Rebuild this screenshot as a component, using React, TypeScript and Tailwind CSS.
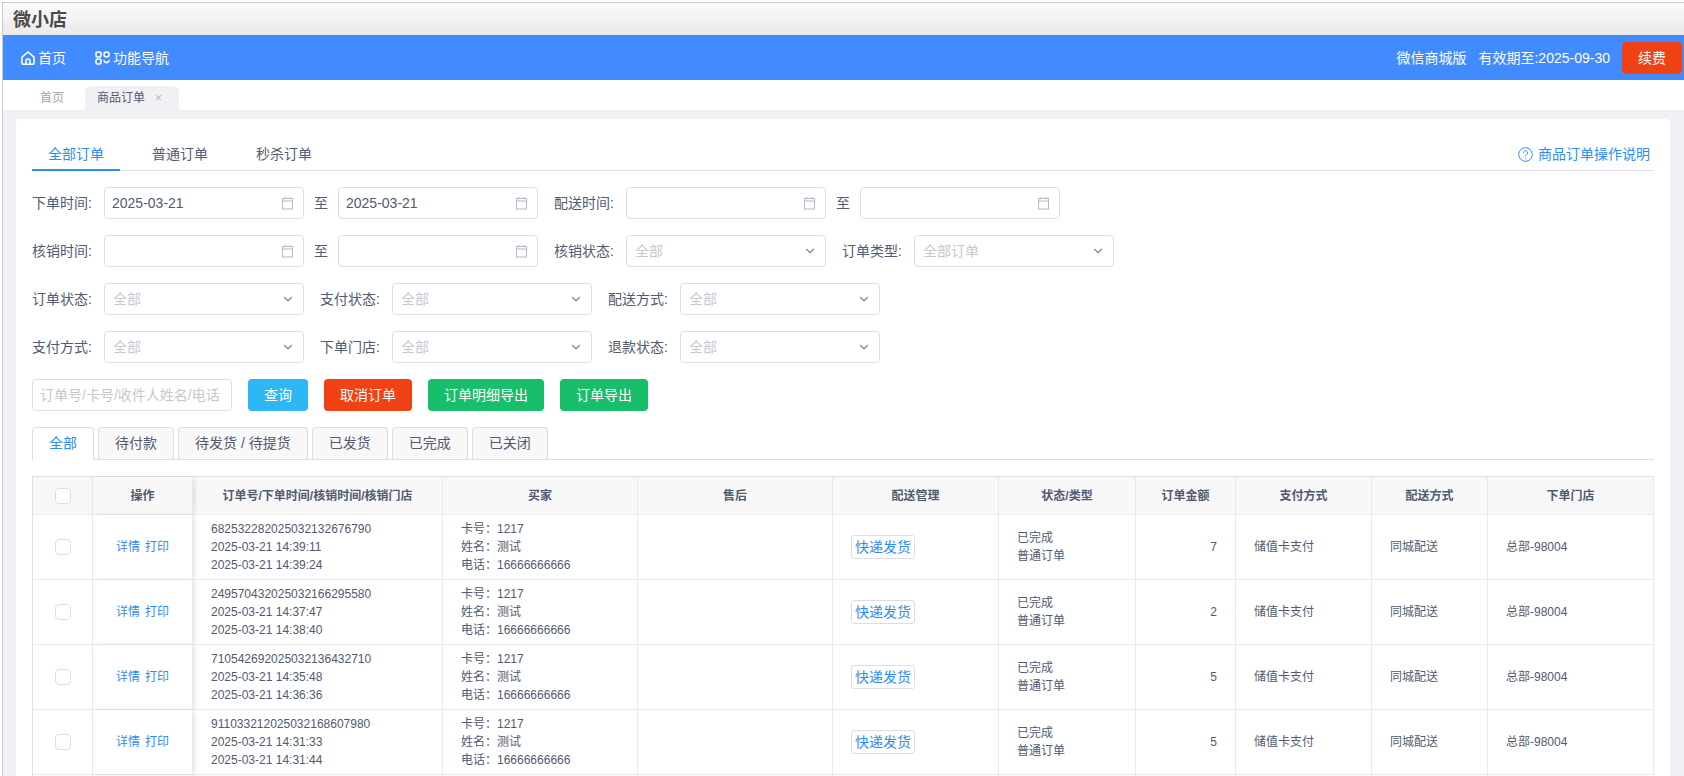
import { ChevronDown } from "lucide-react";

type Order = {
  no: string;
  created: string;
  verified: string;
  amount: number;
};

const orders: Order[] = [
  { no: "682532282025032132676790", created: "2025-03-21 14:39:11", verified: "2025-03-21 14:39:24", amount: 7 },
  { no: "249570432025032166295580", created: "2025-03-21 14:37:47", verified: "2025-03-21 14:38:40", amount: 2 },
  { no: "710542692025032136432710", created: "2025-03-21 14:35:48", verified: "2025-03-21 14:36:36", amount: 5 },
  { no: "911033212025032168607980", created: "2025-03-21 14:31:33", verified: "2025-03-21 14:31:44", amount: 5 },
];

const headers = ["操作", "订单号/下单时间/核销时间/核销门店", "买家", "售后", "配送管理", "状态/类型", "订单金额", "支付方式", "配送方式", "下单门店"];
const statusTabs = ["待付款", "待发货 / 待提货", "已发货", "已完成", "已关闭"];

function CalendarIcon() {
  return (
    <svg width="13" height="14" viewBox="0 0 13 14" fill="none" stroke="#b4b8c8" strokeWidth="1" className="shrink-0">
      <rect x="1.5" y="2.5" width="10" height="10.5" />
      <path d="M1.5 5h10M4 .8v2.4M9 .8v2.4" />
    </svg>
  );
}

function DateField({ value }: { value?: string }) {
  return (
    <div className="flex h-8 w-[200px] items-center justify-between rounded border border-[#dcdee2] bg-white pl-[7px] pr-[9px] text-sm text-[#515a6e]">
      <span>{value}</span>
      <CalendarIcon />
    </div>
  );
}

function SelectField({ value = "全部" }: { value?: string }) {
  return (
    <div className="flex h-8 w-[200px] items-center justify-between rounded border border-[#dcdee2] bg-white pl-2 pr-2 text-sm text-[#c5c8ce]">
      <span>{value}</span>
      <ChevronDown size={14} strokeWidth={2} className="text-[#808695]" />
    </div>
  );
}

function Label({ text }: { text: string }) {
  return <span className="mr-[10px] w-[62px] shrink-0 text-sm text-[#515a6e]">{text}:</span>;
}

function To() {
  return <span className="mx-[10px] text-sm text-[#515a6e]">至</span>;
}

function Checkbox() {
  return <div className="mx-auto h-4 w-4 rounded-sm border border-[#dcdee2] bg-white" />;
}

function ActionButton({ label, className }: { label: string; className: string }) {
  return <button type="button" className={`h-8 rounded text-sm text-white ${className}`}>{label}</button>;
}

export default function App() {
  return (
    <div className="h-[776px] w-full overflow-hidden bg-white pl-[2px] pt-[2px] font-['Liberation_Sans','Noto_Sans_CJK_SC',sans-serif]">
      <div className="flex h-[774px] flex-col border-l border-t border-[#c9c9ce]">
        <div className="flex h-8 shrink-0 items-center bg-gradient-to-b from-[#fbfbfb] to-[#e9e9e9] pl-[10px] pt-[2px] text-lg font-bold text-[#4a4a4a]">
          微小店
        </div>

        <header className="flex h-[45px] shrink-0 items-center justify-between bg-[#428bff] pl-[18px] pr-[2px] text-sm text-white">
          <div className="flex items-center">
            <svg width="14" height="14" viewBox="0 0 14 14" fill="none" stroke="currentColor" strokeWidth="1.6" strokeLinejoin="round" className="mr-[3px]">
              <path d="M1 6.2 7 1l6 5.2V12a1.2 1.2 0 0 1-1.2 1.2H2.2A1.2 1.2 0 0 1 1 12Z" />
              <path d="M5 13v-3a2 2 0 0 1 4 0v3" />
            </svg>
            <span>首页</span>
            <svg width="15" height="14" viewBox="0 0 15 14" fill="none" stroke="currentColor" strokeWidth="1.6" className="ml-[29px] mr-[3px]">
              <rect x="1" y="1" width="5" height="5" rx="1.5" />
              <circle cx="11.5" cy="3.5" r="2.5" />
              <rect x="1" y="8" width="5" height="5" rx="1.5" />
              <path d="M9 9.5c.3 2.5 3.5 3 5 .3" strokeLinecap="round" />
            </svg>
            <span>功能导航</span>
          </div>
          <div className="flex items-center">
            <span>微信商城版</span>
            <span className="ml-3">有效期至:2025-09-30</span>
            <button type="button" className="ml-3 h-8 w-[60px] rounded bg-[#f04214] text-sm text-white">续费</button>
          </div>
        </header>

        <nav className="flex h-[30px] shrink-0 items-end bg-white pl-[37px] text-xs">
          <span className="mb-1 text-[#a3a3a3]">首页</span>
          <div className="ml-[21px] flex h-6 w-[94px] items-center rounded-t-md bg-[#f0f1f5] pl-3 text-[#515a6e]">
            商品订单
            <span className="ml-[10px] text-xs text-[#b5b8c0]">×</span>
          </div>
        </nav>

        <main className="min-h-0 flex-1 bg-[#f0f1f5] pl-[13px] pr-[14px] pt-[9px]">
          <div className="rounded bg-white px-4 pt-[17px] text-[#515a6e]">
            <div className="mb-4 flex h-[35px] items-start justify-between border-b-[1.5px] border-[#dfe1e6] text-sm">
              <div className="flex">
                <span className="mr-4 h-[35px] border-b-2 border-[#2d8cf0] px-4 pt-2 text-[#2d8cf0]">全部订单</span>
                <span className="mr-4 px-4 pt-2">普通订单</span>
                <span className="px-4 pt-2">秒杀订单</span>
              </div>
              <a className="mr-1 mt-2 flex items-center text-[#2d8cf0]">
                <svg width="15" height="15" viewBox="0 0 15 15" fill="none" stroke="currentColor" className="mr-[5px]">
                  <circle cx="7.5" cy="7.5" r="6.8" />
                  <path d="M5.4 5.8a2.1 2.1 0 1 1 3.2 1.8c-.7.4-1.1.9-1.1 1.8" />
                  <path d="M7.5 10.8v1" />
                </svg>
                商品订单操作说明
              </a>
            </div>

            <div className="mb-4 flex items-center">
              <Label text="下单时间" />
              <DateField value="2025-03-21" />
              <To />
              <DateField value="2025-03-21" />
              <div className="w-4" />
              <Label text="配送时间" />
              <DateField />
              <To />
              <DateField />
            </div>
            <div className="mb-4 flex items-center">
              <Label text="核销时间" />
              <DateField />
              <To />
              <DateField />
              <div className="w-4" />
              <Label text="核销状态" />
              <SelectField />
              <div className="w-4" />
              <Label text="订单类型" />
              <SelectField value="全部订单" />
            </div>
            <div className="mb-4 flex items-center">
              <Label text="订单状态" />
              <SelectField />
              <div className="w-4" />
              <Label text="支付状态" />
              <SelectField />
              <div className="w-4" />
              <Label text="配送方式" />
              <SelectField />
            </div>
            <div className="mb-4 flex items-center">
              <Label text="支付方式" />
              <SelectField />
              <div className="w-4" />
              <Label text="下单门店" />
              <SelectField />
              <div className="w-4" />
              <Label text="退款状态" />
              <SelectField />
            </div>

            <div className="mb-4 flex items-center gap-4">
              <div className="flex h-8 w-[200px] items-center rounded border border-[#dcdee2] pl-[7px] text-sm text-[#c5c8ce]">
                订单号/卡号/收件人姓名/电话
              </div>
              <ActionButton label="查询" className="w-[60px] bg-[#2db7f5]" />
              <ActionButton label="取消订单" className="w-[88px] bg-[#f04214]" />
              <ActionButton label="订单明细导出" className="w-[116px] bg-[#19be6b]" />
              <ActionButton label="订单导出" className="w-[88px] bg-[#19be6b]" />
            </div>

            <div className="mb-4 flex h-[33px] gap-1 border-b border-[#dcdee2] text-sm">
              <span className="h-[33px] rounded-t border border-b-0 border-[#dcdee2] bg-white px-4 leading-[30px] text-[#2d8cf0]">全部</span>
              {statusTabs.map((t) => (
                <span key={t} className="h-8 whitespace-pre rounded-t border border-b-0 border-[#dcdee2] bg-[#f8f8f9] px-4 leading-[30px]">
                  {t}
                </span>
              ))}
            </div>

            <table className="w-full table-fixed border-separate border-spacing-0 border-l border-t border-[#dfe1e4] text-xs leading-[18px]">
              <colgroup>
                <col className="w-[60px]" />
                <col className="w-[100px]" />
                <col className="w-[250px]" />
                <col className="w-[195px]" />
                <col className="w-[195px]" />
                <col className="w-[166px]" />
                <col className="w-[137px]" />
                <col className="w-[100px]" />
                <col className="w-[136px]" />
                <col className="w-[116px]" />
                <col />
              </colgroup>
              <thead>
                <tr className="h-[38px] bg-[#f8f8f9]">
                  <th className="border-b border-r border-[#e8eaec]">
                    <Checkbox />
                  </th>
                  {headers.map((h, i) => (
                    <th
                      key={h}
                      className={
                        i === 0
                          ? "relative z-10 border-b border-r border-[#e8eaec] font-bold shadow-[2px_0_6px_-2px_rgba(0,0,0,0.2)]"
                          : "border-b border-r border-[#e8eaec] font-bold"
                      }
                    >
                      {h}
                    </th>
                  ))}
                </tr>
              </thead>
              <tbody>
                {orders.map((o) => (
                  <tr key={o.no} className="h-[65px]">
                    <td className="border-b border-r border-[#e8eaec]">
                      <Checkbox />
                    </td>
                    <td className="relative z-10 border-b border-r border-[#e8eaec] bg-white text-center text-[#2d8cf0] shadow-[2px_0_6px_-2px_rgba(0,0,0,0.2)]">
                      <a>详情</a>
                      <a className="ml-[5px]">打印</a>
                    </td>
                    <td className="border-b border-r border-[#e8eaec] pl-[18px]">
                      <div>{o.no}</div>
                      <div>{o.created}</div>
                      <div>{o.verified}</div>
                    </td>
                    <td className="border-b border-r border-[#e8eaec] pl-[18px]">
                      <div>{"卡号\uFF1A1217"}</div>
                      <div>{"姓名\uFF1A测试"}</div>
                      <div>{"电话\uFF1A16666666666"}</div>
                    </td>
                    <td className="border-b border-r border-[#e8eaec]" />
                    <td className="border-b border-r border-[#e8eaec] pl-[18px]">
                      <button type="button" className="h-6 w-16 rounded-[3px] border border-[#dcdee2] bg-white text-sm text-[#2d8cf0]">
                        快递发货
                      </button>
                    </td>
                    <td className="border-b border-r border-[#e8eaec] pl-[18px]">
                      <div>已完成</div>
                      <div>普通订单</div>
                    </td>
                    <td className="border-b border-r border-[#e8eaec] pr-[18px] text-right">{o.amount}</td>
                    <td className="border-b border-r border-[#e8eaec] pl-[18px]">储值卡支付</td>
                    <td className="border-b border-r border-[#e8eaec] pl-[18px]">同城配送</td>
                    <td className="border-b border-r border-[#e8eaec] pl-[18px]">总部-98004</td>
                  </tr>
                ))}
                <tr className="h-[65px]">
                  <td className="border-r border-[#e8eaec]" />
                  <td className="relative z-10 border-r border-[#e8eaec] shadow-[2px_0_6px_-2px_rgba(0,0,0,0.2)]" />
                  <td className="border-r border-[#e8eaec]" />
                  <td className="border-r border-[#e8eaec]" />
                  <td className="border-r border-[#e8eaec]" />
                  <td className="border-r border-[#e8eaec]" />
                  <td className="border-r border-[#e8eaec]" />
                  <td className="border-r border-[#e8eaec]" />
                  <td className="border-r border-[#e8eaec]" />
                  <td className="border-r border-[#e8eaec]" />
                  <td className="border-r border-[#e8eaec]" />
                </tr>
              </tbody>
            </table>
          </div>
        </main>
      </div>
    </div>
  );
}
